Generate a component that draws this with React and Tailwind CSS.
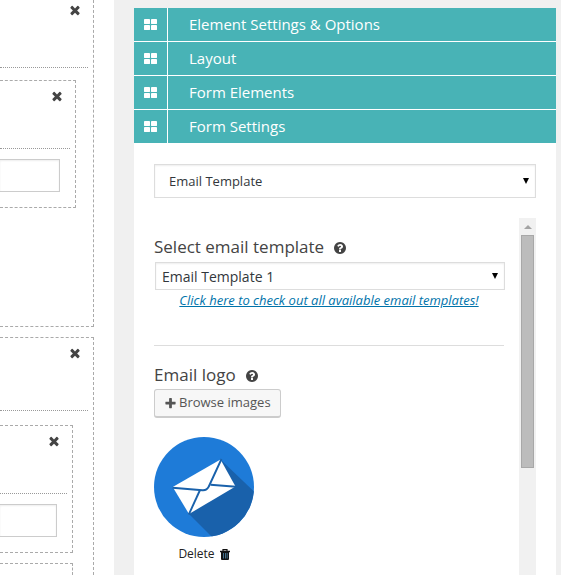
import React from "react";

const paths = {
  times:
    "M1490 1322q0 40-28 68l-136 136q-28 28-68 28t-68-28l-294-294-294 294q-28 28-68 28t-68-28l-136-136q-28-28-28-68t28-68l294-294-294-294q-28-28-28-68t28-68l136-136q28-28 68-28t68 28l294 294 294-294q28-28 68-28t68 28l136 136q28 28 28 68t-28 68l-294 294 294 294q28 28 28 68z",
  help: "M1024 1376v-192q0-14-9-23t-23-9h-192q-14 0-23 9t-9 23v192q0 14 9 23t23 9h192q14 0 23-9t9-23zm256-672q0-88-55.5-163t-138.5-116-170-41q-243 0-371 213-15 24 8 42l132 100q7 6 19 6 16 0 25-12 53-68 86-92 34-24 86-24 48 0 85.5 26t37.5 59q0 38-20 61t-68 45q-63 28-115.5 86.5t-52.5 125.5v36q0 14 9 23t23 9h192q14 0 23-9t9-23q0-19 21.5-49.5t54.5-49.5q32-18 49-28.5t46-35 44.5-48 28-60.5 12.5-81zm384 192q0 209-103 385.5t-279.5 279.5-385.5 103-385.5-103-279.5-279.5-103-385.5 103-385.5 279.5-279.5 385.5-103 385.5 103 279.5 279.5 103 385.5z",
  plus: "M1600 736v192q0 40-28 68t-68 28h-416v416q0 40-28 68t-68 28h-192q-40 0-68-28t-28-68v-416h-416q-40 0-68-28t-28-68v-192q0-40 28-68t68-28h416v-416q0-40 28-68t68-28h192q40 0 68 28t28 68v416h416q40 0 68 28t28 68z",
};

function Icon({ name, className }) {
  return (
    <svg viewBox="0 0 1792 1792" fill="currentColor" aria-hidden="true" className={className}>
      <path d={paths[name]} />
    </svg>
  );
}

function GridIcon() {
  return (
    <svg viewBox="0 0 13 11" fill="currentColor" aria-hidden="true" className="h-[11px] w-[13px]">
      <rect x="0" y="0" width="6" height="5" rx="0.4" />
      <rect x="7" y="0" width="6" height="5" rx="0.4" />
      <rect x="0" y="6" width="6" height="5" rx="0.4" />
      <rect x="7" y="6" width="6" height="5" rx="0.4" />
    </svg>
  );
}

function TrashIcon() {
  return (
    <svg viewBox="0 0 10 11" aria-hidden="true" className="h-[11px] w-2.5">
      <path d="M3 2V.6h4V2" fill="none" stroke="#111" strokeWidth="1.2" />
      <path d="M0 1.800h10v1.400H9V10q0 1-1 1H2q-1 0-1-1V3.200H0z" fill="#111" />
      <path d="M3.500 4v5.500M5.500 4v5.500M7.200 4v5.500" stroke="#4f86a8" strokeWidth="0.8" />
    </svg>
  );
}

function RemoveButton({ label }) {
  return (
    <button type="button" aria-label={label} className="block text-[#444444]">
      <Icon name="times" className="size-3.5" />
    </button>
  );
}

/* Form field block: header with remove button, dotted rule, text box */
function FieldBlock({ label }) {
  return (
    <div className="h-32 border border-l-0 border-dashed border-[#aaaaaa]">
      <div className="mr-[5px] flex h-[68px] items-start justify-end border-b border-dotted border-[#999999] pt-2 pr-1.5">
        <RemoveButton label={`Remove ${label}`} />
      </div>
      <div className="pt-2.5 pr-[15px]">
        <input
          type="text"
          aria-label={label}
          className="block h-[33px] w-full border border-l-0 border-[#cccccc] bg-white shadow-[inset_0_1px_2px_rgba(0,0,0,0.07)] outline-none"
        />
      </div>
    </div>
  );
}

function FormCanvas() {
  return (
    <main className="flex w-[114px] shrink-0 flex-col gap-2.5 overflow-hidden bg-white pr-5">
      <section className="h-[327px] shrink-0 border border-t-0 border-l-0 border-dashed border-[#aaaaaa]">
        <div className="mr-[5px] flex h-[68px] items-start justify-end border-b border-dotted border-[#999999] pt-[3px] pr-1.5">
          <RemoveButton label="Remove first row" />
        </div>
        <div className="pt-3 pr-[17px]">
          <FieldBlock label="First field" />
        </div>
      </section>
      <section className="flex-1 border border-b-0 border-l-0 border-dashed border-[#aaaaaa]">
        <div className="mr-[5px] flex h-[73px] items-start justify-end border-b border-dotted border-[#999999] pt-2 pr-1.5">
          <RemoveButton label="Remove second row" />
        </div>
        <div className="flex flex-col gap-2.5 pt-3.5 pr-5">
          <FieldBlock label="Second field" />
          <div className="h-3 border border-b-0 border-l-0 border-dashed border-[#aaaaaa]" />
        </div>
      </section>
    </main>
  );
}

function Select({ id, label, value, className, arrowClass }) {
  return (
    <div className="relative">
      <select
        id={id}
        aria-label={label}
        defaultValue={value}
        className={`block w-full appearance-none border border-[#dddddd] bg-white text-[#32373c] shadow-[inset_0_1px_2px_rgba(0,0,0,0.07)] outline-none ${className}`}
      >
        <option>{value}</option>
      </select>
      <svg
        viewBox="0 0 6 6"
        aria-hidden="true"
        className={`pointer-events-none absolute size-1.5 ${arrowClass}`}
      >
        <path d="M0 0h6L3 6z" fill="#000" />
      </svg>
    </div>
  );
}

function FieldTitle({ htmlFor, children }) {
  return (
    <div className="flex h-6 items-center gap-[9px] text-[#444444]">
      <label htmlFor={htmlFor} className="text-[17px] leading-6">
        {children}
      </label>
      <button type="button" aria-label={`Help: ${children}`} className="pt-0.5">
        <Icon name="help" className="size-3.5" />
      </button>
    </div>
  );
}

function MailLogo() {
  return (
    <svg viewBox="0 0 100 100" role="img" aria-label="Email logo" className="size-25">
      <defs>
        <clipPath id="disc">
          <circle cx="50" cy="50" r="50" />
        </clipPath>
      </defs>
      <g clipPath="url(#disc)">
        <rect width="100" height="100" fill="#1e7bd8" />
        <path d="M67 23L110 64V110H68L34 76z" fill="#1961ab" />
      </g>
      <path d="M66.500 22.500L81.500 49.500L35 77L18.700 50z" fill="#fff" />
      <g fill="none" stroke="#1961ab" strokeWidth="1.9">
        <path d="M18.500 50.700L48.500 53.200Q52.800 53.500 54.800 49.500L67.500 22" />
        <path d="M56.500 47.800L82 49.700" />
        <path d="M45.800 53.500L34.800 77.500" />
      </g>
    </svg>
  );
}

const sections = ["Element Settings & Options", "Layout", "Form Elements", "Form Settings"];

export default function App() {
  return (
    <div className="flex h-screen overflow-hidden bg-[#f0f0f0] font-['Open_Sans',sans-serif]">
      <FormCanvas />
      <aside className="mt-2 mr-[5px] ml-5 flex min-w-0 flex-1 flex-col bg-white">
        <nav className="flex flex-col gap-px">
          {sections.map((title) => (
            <button
              key={title}
              type="button"
              className="flex h-[33px] w-full gap-px text-left text-[15px] text-white"
            >
              <span className="flex h-full w-[33px] items-center justify-center bg-[#48b3b6]">
                <GridIcon />
              </span>
              <span className="flex h-full flex-1 items-center bg-[#48b3b6] pl-[21px]">{title}</span>
            </button>
          ))}
        </nav>
        <div className="flex min-h-0 flex-1 flex-col px-5 pt-[21px]">
          <Select
            id="section"
            label="Settings section"
            value="Email Template"
            className="h-[34px] pt-px pl-3.5 text-[13px]"
            arrowClass="top-3.5 right-[7px]"
          />
          <div className="mt-5 flex min-h-0 flex-1">
            <div className="min-w-0 flex-1 pt-[17px] pr-3.5">
              <div className="mr-px border-b border-[#dddddd] pb-[35px]">
                <FieldTitle htmlFor="template">Select email template</FieldTitle>
                <div className="-mr-px mt-[3px] ml-px">
                  <Select
                    id="template"
                    value="Email Template 1"
                    className="h-7 pl-1.5 text-[14px]"
                    arrowClass="top-[11px] right-[7px]"
                  />
                </div>
                <p className="text-center text-[13px] leading-5">
                  <a href="#templates" className="text-[#0073aa] italic underline">
                    Click here to check out all available email templates!
                  </a>
                </p>
              </div>
              <div className="pt-[17px]">
                <FieldTitle htmlFor="browse">Email logo</FieldTitle>
                <button
                  id="browse"
                  type="button"
                  className="mt-0.5 flex h-[29px] items-center gap-0.5 rounded-[3px] border border-b-2 border-[#cccccc] bg-[#f7f7f7] px-[9px] text-[13px] text-[#555555]"
                >
                  <Icon name="plus" className="size-[13px]" />
                  Browse images
                </button>
                <div className="mt-[19px] flex w-25 flex-col items-center">
                  <MailLogo />
                  <button
                    type="button"
                    className="mt-[9px] flex items-center gap-[5px] text-[12px] leading-4 text-[#222222]"
                  >
                    Delete
                    <TrashIcon />
                  </button>
                </div>
              </div>
            </div>
            <div className="flex w-[17px] flex-col items-center bg-[#f1f1f1]">
              <div className="flex h-[17px] items-center">
                <svg viewBox="0 0 8 4" aria-hidden="true" className="h-1 w-2">
                  <path d="M0 4h8L4 0z" fill="#a3a3a3" />
                </svg>
              </div>
              <div className="h-[233px] w-[13px] border border-[#a8a8a8] bg-[#bcbcbc]" />
            </div>
          </div>
        </div>
      </aside>
    </div>
  );
}
